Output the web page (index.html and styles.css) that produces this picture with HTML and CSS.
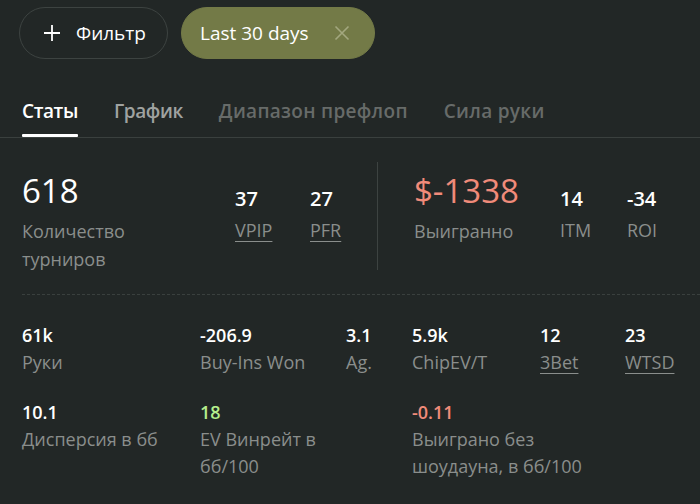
FILE: index.html
```html
<!DOCTYPE html>
<html lang="ru">
<head>
<meta charset="utf-8">
<link rel="stylesheet" href="styles.css">
</head>
<body>
<div class="page">
  <div class="filters">
    <button class="pill pill-outline">
      <svg class="plus" width="18" height="18" viewBox="0 0 18 18"><path d="M9 1v16M1 9h16" stroke="#fff" stroke-width="1.8" fill="none"/></svg>
      <span>Фильтр</span>
    </button>
    <button class="pill pill-active">
      <span>Last 30 days</span>
      <svg class="close" width="16" height="16" viewBox="0 0 16 16"><path d="M1.5 1.5l13 13M14.5 1.5l-13 13" stroke="#a3a77f" stroke-width="1.6" fill="none"/></svg>
    </button>
  </div>

  <nav class="tabs">
    <span class="tab tab-active">Статы</span>
    <span class="tab tab-light">График</span>
    <span class="tab tab-dim">Диапазон префлоп</span>
    <span class="tab tab-dim">Сила руки</span>
  </nav>

  <section class="summary">
    <div class="half half-left">
      <div class="big">
        <div class="big-value">618</div>
        <div class="label">Количество<br>турниров</div>
      </div>
      <div class="small">
        <div class="value">37</div>
        <div class="label link">VPIP</div>
      </div>
      <div class="small s-last">
        <div class="value">27</div>
        <div class="label link">PFR</div>
      </div>
    </div>
    <div class="vdivider"></div>
    <div class="half half-right">
      <div class="big big-r">
        <div class="big-value neg">$-1338</div>
        <div class="label">Выигранно</div>
      </div>
      <div class="small s-itm">
        <div class="value">14</div>
        <div class="label">ITM</div>
      </div>
      <div class="small s-last">
        <div class="value">-34</div>
        <div class="label">ROI</div>
      </div>
    </div>
  </section>

  <div class="dashed"></div>

  <section class="grid">
    <div class="cell c1"><div class="value">61k</div><div class="label">Руки</div></div>
    <div class="cell c2"><div class="value">-206.9</div><div class="label">Buy-Ins Won</div></div>
    <div class="cell c3"><div class="value">3.1</div><div class="label">Ag.</div></div>
    <div class="cell c4"><div class="value">5.9k</div><div class="label">ChipEV/T</div></div>
    <div class="cell c5"><div class="value">12</div><div class="label link">3Bet</div></div>
    <div class="cell c6"><div class="value">23</div><div class="label link">WTSD</div></div>

    <div class="cell c1"><div class="value">10.1</div><div class="label">Дисперсия в бб</div></div>
    <div class="cell span23"><div class="value pos">18</div><div class="label">EV Винрейт в<br>бб/100</div></div>
    <div class="cell span46"><div class="value neg">-0.11</div><div class="label">Выиграно без<br>шоудауна, в бб/100</div></div>
  </section>
</div>
</body>
</html>
```

FILE: styles.css
```css
* { box-sizing: border-box; }
html, body {
  margin: 0;
  padding: 0;
  background: #222726;
  width: 700px;
  height: 504px;
  overflow: hidden;
}
body {
  font-family: "Open Sans", "Noto Sans", sans-serif;
  color: #fff;
}
.page {
  padding: 7px 0 0 0;
}
.filters {
  display: flex;
  gap: 13px;
  padding-left: 19px;
}
.pill {
  height: 52px;
  border-radius: 26px;
  display: flex;
  align-items: center;
  font-family: inherit;
  font-size: 19px;
  color: #fff;
  background: transparent;
  border: 1px solid #3d4341;
  padding: 0;
  font-weight: 500;
}
.pill-outline {
  width: 149px;
  padding-left: 23px;
  gap: 15px;
}
.pill-active {
  width: 194px;
  background: #737a47;
  border-color: #737a47;
  padding-left: 18px;
  gap: 25px;
}
.tabs {
  margin-top: 39px;
  display: flex;
  gap: 36px;
  padding-left: 22px;
  border-bottom: 1px solid #3a403e;
  height: 40px;
}
.tab {
  font-size: 19px;
  font-weight: 600;
  letter-spacing: -0.4px;
  line-height: 26px;
  position: relative;
  height: 100%;
}
.tab-active { color: #fff; }
.tab-active::after {
  content: "";
  position: absolute;
  left: 0;
  right: 0;
  bottom: 0;
  height: 3px;
  background: #fff;
  border-radius: 1px;
}
.tab-light { color: #9fa2a0; }
.tab-dim { color: #676b69; letter-spacing: 0.3px; }

.summary {
  display: flex;
  height: 156px;
  padding-top: 32px;
}
.half {
  display: flex;
  align-items: flex-start;
  flex-shrink: 0;
}
.half-left { padding-left: 22px; width: 377px; }
.half-right { padding-left: 36px; }
.vdivider {
  flex-shrink: 0;
  width: 1px;
  background: #3d4341;
  height: 108px;
  margin-top: -8px;
}
.big { width: 213px; flex-shrink: 0; }
.big-r { width: 146px; }
.big-value {
  font-size: 33px;
  line-height: 42px;
  font-weight: 400;
  letter-spacing: 0;
}
.small { width: 75px; padding-top: 16px; flex-shrink: 0; }
.s-itm { width: 67px; }
.s-last { width: auto; }
.small .value {
  font-size: 20px;
  line-height: 26px;
}
.value {
  font-size: 18px;
  line-height: 24px;
  font-weight: 600;
}
.label {
  font-size: 18px;
  line-height: 27px;
  color: #8a8e8c;
}
.big .label { margin-top: 5px; line-height: 28px; }
.small .label { margin-top: 4px; line-height: 28px; }
.link { text-decoration: underline; text-underline-offset: 4px; text-decoration-thickness: 1px; }
.neg { color: #f08b7a; }
.pos { color: #b5ee8c; }

.dashed {
  margin-left: 22px;
  border-top: 1px dashed #3a403e;
}
.grid {
  display: grid;
  grid-template-columns: 178px 146px 66px 128px 85px 1fr;
  padding-left: 22px;
  padding-top: 28px;
  row-gap: 24px;
}
.cell .label { margin-top: 2px; }
.c1 { grid-column: 1; }
.c2 { grid-column: 2; }
.c3 { grid-column: 3; }
.c4 { grid-column: 4; }
.c5 { grid-column: 5; }
.c6 { grid-column: 6; }
.span23 { grid-column: 2 / 4; }
.span46 { grid-column: 4 / 7; }
```
